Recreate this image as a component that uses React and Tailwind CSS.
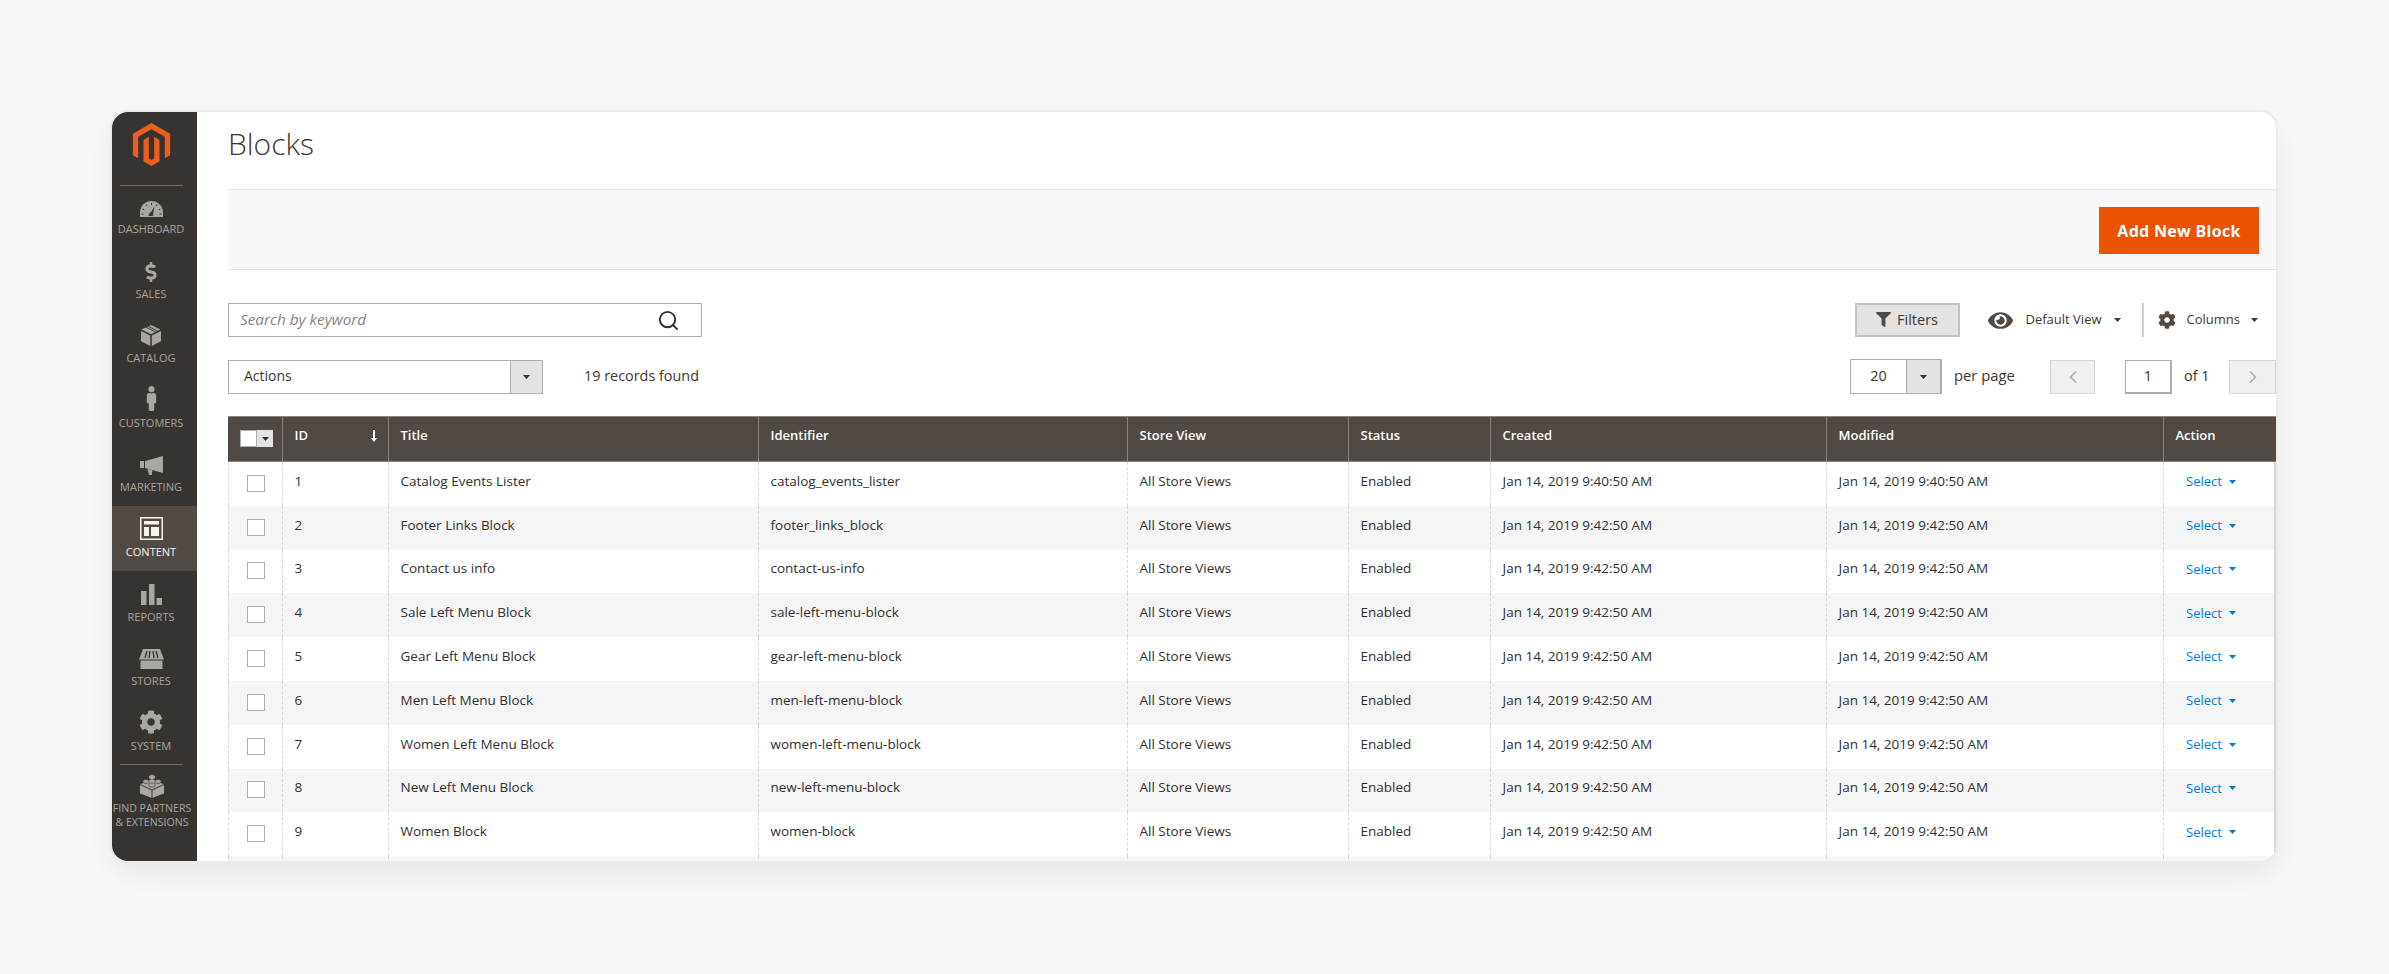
import { ChevronLeft, ChevronRight, Search } from "lucide-react";
import { FaCog, FaDollarSign, FaEye, FaFilter, FaMale } from "react-icons/fa";
import { SiMagento } from "react-icons/si";

const GaugeIcon = () => (
  <svg width="23" height="16" viewBox="0 0 23 16">
    <path d="M0 16V11.5A11.5 11.5 0 0 1 23 11.5V16Z" fill="currentColor" />
    <g stroke="#373330" strokeWidth="1" fill="none">
      <path d="M11.5 2v2M6 3.5l1 1.6M17 3.5l-1 1.6M2.5 8l1.7.8M20.5 8l-1.7.8M1.5 13h2M19.5 13h2" />
    </g>
    <path d="M8.5 15l1-3 2-1.4 2.8-5-.9 6.2-.6 3.2Z" fill="#373330" />
  </svg>
);

const BoxIcon = () => (
  <svg width="20" height="21" viewBox="0 0 20 21">
    <path d="M10 0l9.5 4.6L10 9.2.5 4.6Z" fill="currentColor" />
    <path d="M0 6l9.2 4.5V21L0 16.2ZM20 6l-9.2 4.5V21L20 16.2Z" fill="currentColor" />
    <path d="M5 2.2l9.5 4.7M7 1.2l9.5 4.7" stroke="#373330" strokeWidth="0.9" />
  </svg>
);

const MegaphoneIcon = () => (
  <svg width="23" height="19" viewBox="0 0 23 19" fill="currentColor">
    <rect y="5" width="4" height="7" />
    <path d="M5 5L23 0V17L5 12Z" />
    <path d="M7.500 13l5 1.300-.8 4.700H9Z" />
  </svg>
);

const LayoutIcon = () => (
  <svg width="23" height="23" viewBox="0 0 23 23">
    <rect width="23" height="23" fill="#f7f3eb" />
    <rect x="1.5" y="1.5" width="20" height="20" fill="#514943" />
    <rect x="4" y="4" width="15" height="3.5" fill="#f7f3eb" />
    <rect x="4" y="10" width="5" height="9" fill="#f7f3eb" />
    <rect x="11" y="10" width="8" height="9" fill="#f7f3eb" />
  </svg>
);

const BarsIcon = () => (
  <svg width="21" height="21" viewBox="0 0 21 21" fill="currentColor">
    <rect y="7" width="5.5" height="14" />
    <rect x="8" width="5.5" height="21" />
    <rect x="15.5" y="14" width="5.5" height="7" />
  </svg>
);

const StoreIcon = () => (
  <svg width="25" height="20" viewBox="0 0 25 20">
    <path d="M4 0h17l4 10.5H0Z" fill="currentColor" />
    <path d="M8 2L6 9M11 2l-1 7M14 2l1 7M17 2l2 7" stroke="#373330" strokeWidth="1.3" />
    <path d="M1.5 11.5h22V20h-22Z" fill="currentColor" />
  </svg>
);

const BrickIcon = () => (
  <svg width="24" height="24" viewBox="0 0 24 24">
    <path d="M12 5l12 5.5v9L12 24 0 19.500v-9Z" fill="currentColor" />
    <path d="M0 10.500L12 16l12-5.500M12 16v8" stroke="#373330" strokeWidth="0.9" fill="none" />
    <ellipse cx="12" cy="3" rx="3.200" ry="2" fill="currentColor" />
    <ellipse cx="6" cy="7.500" rx="3.200" ry="2" fill="currentColor" stroke="#373330" strokeWidth="0.6" />
    <ellipse cx="18" cy="7.500" rx="3.200" ry="2" fill="currentColor" stroke="#373330" strokeWidth="0.6" />
    <ellipse cx="12" cy="11" rx="3.200" ry="2" fill="currentColor" stroke="#373330" strokeWidth="0.6" />
  </svg>
);

const SortArrow = () => (
  <svg width="6" height="12" viewBox="0 0 6 12" className="text-white">
    <path d="M2 0h2v8h2l-3 4-3-4h2Z" fill="currentColor" />
  </svg>
);

const NAV = [
  { label: "Dashboard", icon: <GaugeIcon /> },
  { label: "Sales", icon: <FaDollarSign size={20} /> },
  { label: "Catalog", icon: <BoxIcon /> },
  { label: "Customers", icon: <FaMale size={25} /> },
  { label: "Marketing", icon: <MegaphoneIcon /> },
  { label: "Content", icon: <LayoutIcon />, active: true },
  { label: "Reports", icon: <BarsIcon /> },
  { label: "Stores", icon: <StoreIcon /> },
  { label: "System", icon: <FaCog size={24} /> },
];

const COLUMNS = [
  { label: "ID", width: "w-[106px]" },
  { label: "Title", width: "w-[370px]" },
  { label: "Identifier", width: "w-[369px]" },
  { label: "Store View", width: "w-[221px]" },
  { label: "Status", width: "w-[142px]" },
  { label: "Created", width: "w-[336px]" },
  { label: "Modified", width: "w-[337px]" },
];

const BLOCKS = [
  [1, "Catalog Events Lister", "catalog_events_lister", "9:40:50 AM"],
  [2, "Footer Links Block", "footer_links_block", "9:42:50 AM"],
  [3, "Contact us info", "contact-us-info", "9:42:50 AM"],
  [4, "Sale Left Menu Block", "sale-left-menu-block", "9:42:50 AM"],
  [5, "Gear Left Menu Block", "gear-left-menu-block", "9:42:50 AM"],
  [6, "Men Left Menu Block", "men-left-menu-block", "9:42:50 AM"],
  [7, "Women Left Menu Block", "women-left-menu-block", "9:42:50 AM"],
  [8, "New Left Menu Block", "new-left-menu-block", "9:42:50 AM"],
  [9, "Women Block", "women-block", "9:42:50 AM"],
];

const Caret = ({ className = "" }) => (
  <svg width="7" height="4" viewBox="0 0 7 4" className={className}>
    <path d="M0 0h7L3.500 4Z" fill="currentColor" />
  </svg>
);

function NavItem({ label, icon, active }) {
  return (
    <div
      className={`flex h-[64.6px] flex-col items-center pr-[7px] ${
        active ? "bg-[#514943] text-[#f7f3eb]" : "text-[#aaa6a0]"
      }`}
    >
      <div className="flex h-[34px] items-end justify-center">{icon}</div>
      <div className="mt-[5px] text-[11px] leading-[14px] uppercase">{label}</div>
    </div>
  );
}

function Sidebar() {
  return (
    <aside className="w-[85px] shrink-0 bg-[#373330]">
      <div className="ml-2 mr-[14px] flex h-[74px] items-start justify-center border-b border-[#736e69] pt-[11px]">
        <SiMagento size={43} className="text-[#eb5f1c]" />
      </div>
      <nav className="-mt-[3px]">
        {NAV.map((item) => (
          <NavItem key={item.label} {...item} />
        ))}
      </nav>
      <div className="ml-2 mr-[14px] border-t border-[#736e69]" />
      <div className="flex flex-col items-center pr-[5px] pt-[9px] text-[#aaa6a0]">
        <BrickIcon />
        <div className="mt-[3px] whitespace-nowrap text-center text-[10.6px] leading-[14px] uppercase">
          Find Partners
          <br />& Extensions
        </div>
      </div>
    </aside>
  );
}

function Toolbar() {
  return (
    <div className="pr-[18px] pt-[33px]">
      <div className="flex h-[34px] items-center justify-between">
        <div className="flex h-full w-[474px] items-center justify-between border border-[#adadad] pl-[11px] pr-[21px]">
          <span className="pb-[2px] text-[15.3px] text-[#8a837f] italic">Search by keyword</span>
          <Search size={23} strokeWidth={2} className="text-[#303030]" />
        </div>
        <div className="flex h-full items-center text-[#41362f]">
          <button className="flex h-full w-[105px] items-center justify-center gap-[6px] border-2 border-[#c2c2c2] bg-[#e3e3e3] pb-[1px] text-[14.5px]">
            <FaFilter size={15} className="text-[#514943]" />
            Filters
          </button>
          <FaEye size={25} className="ml-[28px] text-[#514943]" />
          <span className="ml-[13px] text-[13px]">Default View</span>
          <Caret className="ml-[12px]" />
          <div className="ml-[21px] h-full w-[2px] bg-[#d1d1d1]" />
          <FaCog size={18} className="ml-[14px] text-[#514943]" />
          <span className="ml-[11px] text-[13px]">Columns</span>
          <Caret className="ml-[11px]" />
        </div>
      </div>
      <div className="-mr-[18px] mt-[22px] flex h-[35px] items-center justify-between text-[#41362f]">
        <div className="flex h-full items-center">
          <div className="flex h-[34px] w-[315px] border border-[#adadad]">
            <div className="flex flex-1 items-center pb-[2px] pl-[15px] text-[14px]">Actions</div>
            <div className="flex w-[32px] items-center justify-center border-l border-[#adadad] bg-[#e3e3e3] text-[#303030]">
              <Caret />
            </div>
          </div>
          <span className="ml-[41px] pb-[2px] text-[14.4px]">19 records found</span>
        </div>
        <div className="flex h-full items-center">
          <div className="flex h-full w-[92px] border border-r-2 border-[#adadad]">
            <div className="flex flex-1 items-center justify-center pb-[2px] text-[14.5px]">20</div>
            <div className="flex w-[34px] items-center justify-center border-l border-[#adadad] bg-[#e3e3e3] text-[#303030]">
              <Caret />
            </div>
          </div>
          <span className="ml-[12px] w-[59px] whitespace-nowrap pb-[2px] text-[14.8px]">per page</span>
          <div className="ml-[37px] flex h-[34px] w-[45px] items-center justify-center border border-[#d6d6d6] bg-[#f0f0f0] text-[#adadad]">
            <ChevronLeft size={20} />
          </div>
          <div className="ml-[30px] flex h-[34px] w-[47px] items-center justify-center border border-r-2 border-b-2 border-[#adadad] pb-[1px] text-[14.5px] font-medium">
            1
          </div>
          <span className="ml-[12px] w-[23px] whitespace-nowrap pb-[2px] text-[14.5px]">of 1</span>
          <div className="ml-[22px] flex h-[34px] w-[47px] items-center justify-center border border-[#d6d6d6] bg-[#f0f0f0] text-[#adadad]">
            <ChevronRight size={20} />
          </div>
        </div>
      </div>
    </div>
  );
}

function BlocksTable() {
  const cell = "border-r border-dashed border-[#d6d6d6] pl-[11.5px] align-middle pb-[6px]";
  return (
    <table className="mt-[22px] w-[2048px] table-fixed border-separate border-spacing-0 text-[13.5px] text-[#303030]">
      <colgroup>
        <col className="w-[55px]" />
        {COLUMNS.map((c) => (
          <col key={c.label} className={c.width} />
        ))}
        <col className="w-[112px]" />
      </colgroup>
      <thead>
        <tr className="h-[46px] bg-[#514943] text-left align-top text-[13px] font-semibold text-white">
          <th className="border-y border-r border-[#8a837f] pl-[12px] pt-[13px] font-normal">
            <div className="flex h-[17px] w-[33px] bg-[#e3e3e3]">
              <div className="w-[17px] border border-[#adadad] bg-white" />
              <div className="flex flex-1 items-center justify-center text-[#303030]">
                <Caret />
              </div>
            </div>
          </th>
          {COLUMNS.map((c) => (
            <th
              key={c.label}
              className="border-y border-r border-[#8a837f] pl-[11.5px] pt-[9px] font-semibold"
            >
              {c.label === "ID" ? (
                <div className="flex items-center justify-between pr-[11px]">
                  ID
                  <SortArrow />
                </div>
              ) : (
                c.label
              )}
            </th>
          ))}
          <th className="border-y border-[#8a837f] pl-[11.5px] pt-[9px] font-semibold">Action</th>
        </tr>
      </thead>
      <tbody>
        {BLOCKS.map(([id, title, identifier, time], i) => (
          <tr key={id} className={`h-[43.800px] ${i % 2 ? "bg-[#f5f5f5]" : "bg-white"}`}>
            <td className="border-x border-dashed border-x-[#d6d6d6] pb-[1px] pl-[18px] align-middle">
              <div className="h-[17px] w-[18px] border border-[#adadad] bg-white" />
            </td>
            <td className={cell}>{id}</td>
            <td className={cell}>{title}</td>
            <td className={cell}>{identifier}</td>
            <td className={cell}>All Store Views</td>
            <td className={cell}>Enabled</td>
            <td className={cell}>Jan 14, 2019 {time}</td>
            <td className={cell}>Jan 14, 2019 {time}</td>
            <td className="border-r-2 border-[#d6d6d6] pb-[4px] pl-[22px] align-middle text-[13px] text-[#007bdb]">
              <span className="inline-flex items-center gap-[7px]">
                Select
                <Caret />
              </span>
            </td>
          </tr>
        ))}
        <tr className="h-[43.800px] bg-[#f5f5f5]">
          <td className="border-x border-dashed border-[#d6d6d6]" />
          <td className={cell} />
          <td className={cell} />
          <td className={cell} />
          <td className={cell} />
          <td className={cell} />
          <td className={cell} />
          <td className={cell} />
          <td className="border-r-2 border-[#d6d6d6]" />
        </tr>
      </tbody>
    </table>
  );
}

export default function App() {
  return (
    <div className="h-[974px] overflow-hidden bg-[#f8f8f8] pl-[112px] pt-[112px] font-['Open_Sans',sans-serif]">
      <div className="flex h-[749px] w-[2164px] overflow-hidden rounded-[16px] bg-white shadow-[0_0_0_2px_#ebebeb,0_12px_32px_rgba(0,0,0,0.08)]">
        <Sidebar />
        <main className="min-w-0 flex-1 pl-[31px]">
          <div className="flex h-[77px] items-start pt-[11px]">
            <h1 className="text-[30px] leading-[42px] font-light text-[#41362f]">Blocks</h1>
          </div>
          <div className="flex h-[81px] items-center justify-end border-y border-[#e3e3e3] bg-[#f8f8f8] pr-[17px] pt-[2px]">
            <button className="h-[47px] w-[160px] bg-[#eb5202] text-[16px] font-bold tracking-[0.3px] text-white">
              Add New Block
            </button>
          </div>
          <Toolbar />
          <BlocksTable />
        </main>
      </div>
    </div>
  );
}
